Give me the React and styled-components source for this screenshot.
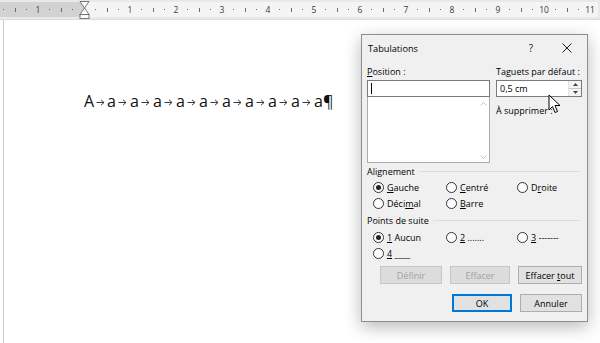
import React from 'react'
import styled, { createGlobalStyle } from 'styled-components'

const Global = createGlobalStyle`
  html, body { margin: 0; padding: 0; background: #fff; }
  body { font-family: "Open Sans", "Noto Sans", sans-serif; }
  * { box-sizing: border-box; }
`

const Screen = styled.div`
  position: relative;
  width: 600px;
  height: 343px;
  overflow: hidden;
  display: flex;
  flex-direction: column;
  background: #fff;
`

/* ---------- ruler ---------- */
const Ruler = styled.div`
  height: 20px;
  flex: none;
  background: #e9e9e9;
  border-bottom: 1px solid #dcdcdc;
  display: flex;
  align-items: center;
  overflow: hidden;
`
const RulerBand = styled.div`
  height: 15px;
  width: 100%;
  display: flex;
  align-items: center;
  margin-left: -2.25px;
  background: linear-gradient(to right, #d2d2d2 0, #d2d2d2 86px, #f4f4f4 86px);
`
const Mark = styled.div`
  width: 11.5px;
  flex: none;
  height: 100%;
  display: flex;
  align-items: center;
  justify-content: center;
  position: relative;
  font-family: "Open Sans", sans-serif;
  font-size: 8.5px;
  color: #3a3a3a;
`
const Dot = styled.span`
  width: 1px;
  height: 1px;
  background: #6a6a6a;
`
const Tick = styled.span`
  width: 1px;
  height: 4px;
  background: #6a6a6a;
`
const IndentMarker = styled.svg`
  position: absolute;
  top: -2px;
  left: 0.5px;
`

/* ---------- page ---------- */
const Page = styled.div`
  flex: 1;
  margin-left: 3px;
  border-left: 1px solid #cfcfcf;
  padding: 71px 0 0 80px;
`
const Line = styled.div`
  display: flex;
  height: 20px;
  align-items: center;
  font-family: "Open Sans", sans-serif;
  font-size: 16px;
  color: #111;
`
const TabCell = styled.span`
  width: 23px;
  flex: none;
  display: flex;
  align-items: center;
  white-space: nowrap;
`
const Arrow = styled.span`
  flex: 1;
  display: flex;
  justify-content: center;
  padding-top: 2px;
`

/* ---------- dialog ---------- */
const Dialog = styled.div`
  position: absolute;
  left: 361px;
  top: 34px;
  width: 227px;
  height: 288px;
  background: #f0f0f0;
  border: 1px solid #8f8f8f;
  box-shadow: 0 5px 16px rgba(0, 0, 0, 0.28);
  display: flex;
  flex-direction: column;
  font-family: "Open Sans", sans-serif;
  font-size: 9px;
  color: #000;
`
const TitleBar = styled.div`
  height: 26px;
  display: flex;
  align-items: center;
  padding-left: 6px;
  font-size: 9.2px;
`
const Title = styled.div`
  flex: 1;
`
const TitleButton = styled.div`
  width: ${p => p.$w}px;
  display: flex;
  justify-content: center;
  align-items: center;
  font-size: 10px;
  color: #222;
`
const Body = styled.div`
  flex: 1;
  padding: 4px 5px 0 5px;
  display: flex;
  flex-direction: column;
`
const TopGrid = styled.div`
  display: grid;
  grid-template-columns: 123px 86px;
  column-gap: 6px;
`
const Col = styled.div`
  display: flex;
  flex-direction: column;
`
const Label = styled.div`
  height: 14px;
  line-height: 14px;
  margin-bottom: 1px;
  margin-top: ${p => p.$mt || 0}px;
  white-space: nowrap;
`
const U = styled.span`
  text-decoration: underline;
  text-underline-offset: 1px;
`
const TextBox = styled.div`
  height: 17px;
  background: #fff;
  border: 1px solid #7a7a7a;
  display: flex;
  align-items: center;
  padding-left: 3px;
`
const Caret = styled.span`
  width: 1px;
  height: 11px;
  background: #000;
`
const ListBox = styled.div`
  height: 66px;
  background: #fff;
  border: 1px solid #acacac;
  border-top: none;
  display: flex;
  justify-content: flex-end;
`
const ScrollBar = styled.div`
  width: 12px;
  display: flex;
  flex-direction: column;
  justify-content: space-between;
  align-items: center;
  padding: 5px 0 3px;
`
const SpinBox = styled(TextBox)`
  padding-right: 0;
  justify-content: space-between;
`
const Spinner = styled.div`
  width: 13px;
  height: 100%;
  display: flex;
  flex-direction: column;
  border-left: 1px solid #e2e2e2;
  background: #f3f3f3;
`
const SpinHalf = styled.div`
  flex: 1;
  display: flex;
  align-items: center;
  justify-content: center;
  & + & { border-top: 1px solid #c8c8c8; }
`
const Section = styled.div`
  display: flex;
  align-items: center;
  gap: 4px;
  height: 14px;
  margin-top: ${p => p.$mt}px;
  &::after {
    content: '';
    flex: 1;
    height: 1px;
    background: #dcdcdc;
    margin-right: 2px;
  }
`
const RadioGrid = styled.div`
  display: grid;
  grid-template-columns: 73px 71px auto;
  grid-auto-rows: ${p => p.$row}px;
  padding-left: 6px;
  margin-top: ${p => p.$mt}px;
`
const RadioItem = styled.div`
  display: flex;
  align-items: center;
  gap: 3px;
  white-space: nowrap;
`
const RadioCircle = styled.span`
  width: 11px;
  height: 11px;
  flex: none;
  border-radius: 50%;
  border: 1px solid #333;
  background: #fff;
  display: flex;
  align-items: center;
  justify-content: center;
  &::after {
    content: '';
    width: 5px;
    height: 5px;
    border-radius: 50%;
    background: ${p => (p.$checked ? '#222' : 'transparent')};
  }
`
const ButtonRow = styled.div`
  display: flex;
  justify-content: flex-end;
  gap: ${p => p.$gap}px;
  margin-top: ${p => p.$mt}px;
`
const Button = styled.div`
  width: ${p => p.$w}px;
  height: 18px;
  display: flex;
  align-items: center;
  justify-content: center;
  white-space: pre;
  border: ${p => (p.$default ? '2px' : '1px')} solid;
  color: ${p => (p.$disabled ? '#a2a2a2' : '#000')};
  border-color: ${p => (p.$disabled ? '#c6c6c6' : p.$default ? '#0078d7' : '#adadad')};
  background: ${p => (p.$disabled ? '#dcdcdc' : '#e1e1e1')};
`
const Pointer = styled.svg`
  position: absolute;
  left: 548px;
  top: 94px;
`

const rulerMarks = []
for (let k = -7; k <= 45; k++) rulerMarks.push(k)

function RulerMark({ k }) {
  if (k === 0) {
    return (
      <Mark>
        <IndentMarker width="11" height="20" viewBox="0 0 11 20">
          <path d="M1 1.5 H10 L5.5 8 Z" fill="#fff" stroke="#777" strokeWidth="1" />
          <path d="M5.5 8 L10 14.5 H1 Z" fill="#fff" stroke="#777" strokeWidth="1" />
          <rect x="1" y="14.5" width="9" height="4" fill="#fff" stroke="#777" strokeWidth="1" />
        </IndentMarker>
      </Mark>
    )
  }
  if (k % 4 === 0) return <Mark>{Math.abs(k / 4)}</Mark>
  if (Math.abs(k % 4) === 2) return <Mark><Tick /></Mark>
  return <Mark><Dot /></Mark>
}

function TabArrow() {
  return (
    <Arrow>
      <svg width="9" height="7" viewBox="0 0 9 7">
        <path d="M0.5 3.5 H8 M5 0.8 L8 3.5 L5 6.2" fill="none" stroke="#3a3a3a" strokeWidth="1" />
      </svg>
    </Arrow>
  )
}

function Radio({ checked, children }) {
  return (
    <RadioItem>
      <RadioCircle $checked={checked} />
      <span>{children}</span>
    </RadioItem>
  )
}

export default function App() {
  const cells = Array.from({ length: 10 })
  return (
    <Screen>
      <Global />
      <Ruler>
        <RulerBand>
          {rulerMarks.map(k => <RulerMark key={k} k={k} />)}
        </RulerBand>
      </Ruler>

      <Page>
        <Line>
          <TabCell>A<TabArrow /></TabCell>
          {cells.map((_, i) =>
            i < 9 ? (
              <TabCell key={i}>a<TabArrow /></TabCell>
            ) : (
              <TabCell key={i}>a¶</TabCell>
            )
          )}
        </Line>
      </Page>

      <Dialog>
        <TitleBar>
          <Title>Tabulations</Title>
          <TitleButton $w={32}>?</TitleButton>
          <TitleButton $w={40}>
            <svg width="10" height="10" viewBox="0 0 10 10">
              <path d="M0.5 0.5 L9.5 9.5 M9.5 0.5 L0.5 9.5" stroke="#222" strokeWidth="1" />
            </svg>
          </TitleButton>
        </TitleBar>

        <Body>
          <TopGrid>
            <Col>
              <Label><U>P</U>osition :</Label>
              <TextBox><Caret /></TextBox>
              <ListBox>
                <ScrollBar>
                  <svg width="7" height="4" viewBox="0 0 7 4">
                    <path d="M0.5 3.5 L3.5 0.5 L6.5 3.5" fill="none" stroke="#c4c4c4" />
                  </svg>
                  <svg width="7" height="4" viewBox="0 0 7 4">
                    <path d="M0.5 0.5 L3.5 3.5 L6.5 0.5" fill="none" stroke="#c4c4c4" />
                  </svg>
                </ScrollBar>
              </ListBox>
            </Col>
            <Col>
              <Label>Ta<U>g</U>uets par défaut :</Label>
              <SpinBox>
                <span>0,5 cm</span>
                <Spinner>
                  <SpinHalf>
                    <svg width="5" height="3" viewBox="0 0 5 3"><path d="M0 3 L2.5 0 L5 3 Z" fill="#444" /></svg>
                  </SpinHalf>
                  <SpinHalf>
                    <svg width="5" height="3" viewBox="0 0 5 3"><path d="M0 0 L2.5 3 L5 0 Z" fill="#444" /></svg>
                  </SpinHalf>
                </Spinner>
              </SpinBox>
              <Label $mt={7}>À supprimer :</Label>
            </Col>
          </TopGrid>

          <Section $mt={1}>Alignement</Section>
          <RadioGrid $row={15.5} $mt={2}>
            <Radio checked><U>G</U>auche</Radio>
            <Radio><U>C</U>entré</Radio>
            <Radio>D<U>r</U>oite</Radio>
            <Radio>Déci<U>m</U>al</Radio>
            <Radio><U>B</U>arre</Radio>
          </RadioGrid>

          <Section $mt={2}>Points de suite</Section>
          <RadioGrid $row={15.5} $mt={3}>
            <Radio checked><U>1</U> Aucun</Radio>
            <Radio><U>2</U> .......</Radio>
            <Radio><U>3</U> -------</Radio>
            <Radio><U>4</U> ____</Radio>
          </RadioGrid>

          <ButtonRow $gap={8} $mt={5}>
            <Button $w={62} $disabled>Définir</Button>
            <Button $w={60} $disabled>Effacer</Button>
            <Button $w={64}><span>Effacer <U>t</U>out</span></Button>
          </ButtonRow>
          <ButtonRow $gap={8} $mt={10}>
            <Button $w={60} $default>OK</Button>
            <Button $w={62}>Annuler</Button>
          </ButtonRow>
        </Body>
      </Dialog>

      <Pointer width="13" height="20" viewBox="0 0 13 20">
        <path d="M1 1 L1 16 L4.5 12.5 L7 18.5 L9.5 17.5 L7 11.5 L12 11.5 Z" fill="#fff" stroke="#000" strokeWidth="1" strokeLinejoin="round" />
      </Pointer>
    </Screen>
  )
}
